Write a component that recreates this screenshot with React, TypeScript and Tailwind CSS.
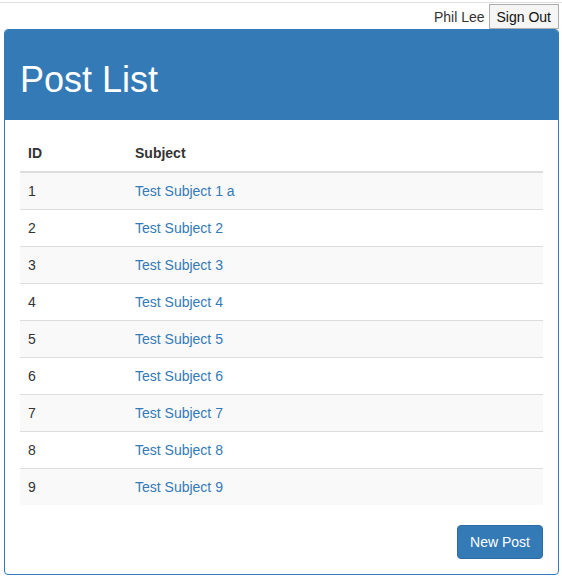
const posts = Array.from({ length: 9 }, (_, i) => ({
  id: i + 1,
  subject: i === 0 ? "Test Subject 1 a" : `Test Subject ${i + 1}`,
}));

export default function App() {
  return (
    <div className="min-h-[581px] bg-white font-['Liberation_Sans',Arial,sans-serif] text-[14px] leading-[20px] text-[#333]">
      <div className="mt-[2px] border-t border-[#ddd]" />
      <div className="ml-[4px] mr-[3px]">
        <div className="flex h-[26px] items-center justify-end gap-[4px] pt-[1px]">
          <span>Phil Lee</span>
          <button className="h-[25px] border border-[#adadad] bg-[#f5f5f5] px-[7px] leading-[20px] text-[#111]">
            Sign Out
          </button>
        </div>
        <div className="overflow-hidden rounded-[4px] border border-[#337ab7]">
          <div className="bg-[#337ab7] px-[15px] pb-[20px] pt-[30px] text-white">
            <h1 className="text-[36px] leading-[40px]">Post List</h1>
          </div>
          <div className="p-[15px]">
            <table className="mb-[20px] w-full border-collapse">
              <thead>
                <tr className="border-b-2 border-[#ddd]">
                  <th className="w-[107px] p-[8px] text-left font-bold">ID</th>
                  <th className="p-[8px] text-left font-bold">Subject</th>
                </tr>
              </thead>
              <tbody>
                {posts.map((post, idx) => (
                  <tr
                    key={post.id}
                    className={`${idx > 0 ? "border-t border-[#ddd]" : ""} ${idx % 2 === 0 ? "bg-[#f9f9f9]" : ""}`}
                  >
                    <td className="p-[8px]">{post.id}</td>
                    <td className="p-[8px]">
                      <a className="text-[#337ab7]" href="#">
                        {post.subject}
                      </a>
                    </td>
                  </tr>
                ))}
              </tbody>
            </table>
            <div className="flex justify-end">
              <button className="rounded-[4px] border border-[#2e6da4] bg-[#337ab7] px-[12px] py-[6px] text-white">
                New Post
              </button>
            </div>
          </div>
        </div>
      </div>
    </div>
  );
}
